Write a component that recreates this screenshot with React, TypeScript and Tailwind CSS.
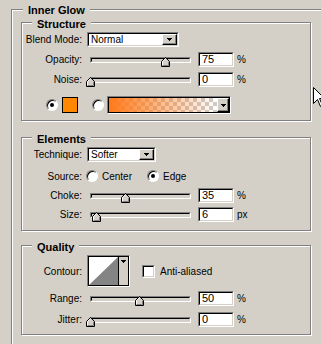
import React from "react";

const sunken = "border border-t-[#808080] border-l-[#808080] border-b-white border-r-white";
const sunkenInner = "border border-t-black border-l-black border-b-[#d4d0c8] border-r-[#d4d0c8]";
const etched = "border border-[#808080] shadow-[inset_1px_1px_0_#fff,1px_1px_0_#fff]";

function Arrow() {
  return (
    <svg width="5" height="3" viewBox="0 0 5 3" shapeRendering="crispEdges" className="block">
      <rect x="0" y="0" width="5" height="1" fill="#000" />
      <rect x="1" y="1" width="3" height="1" fill="#000" />
      <rect x="2" y="2" width="1" height="1" fill="#000" />
    </svg>
  );
}

function DropBtn({ className }: { className: string }) {
  return (
    <div
      className={`flex items-center justify-center bg-[#d4d0c8] border border-t-white border-l-white border-b-black border-r-black shadow-[inset_-1px_-1px_0_#808080] ${className}`}
    >
      <Arrow />
    </div>
  );
}

function Select({ value, className }: { value: string; className: string }) {
  return (
    <div className={`flex h-[15px] ${sunken} ${className}`}>
      <div className={`flex flex-1 bg-white ${sunkenInner}`}>
        <span className="flex-1 pl-[2px] leading-[11px]">{value}</span>
        <DropBtn className="w-[15px]" />
      </div>
    </div>
  );
}

function Thumb({ className }: { className: string }) {
  return (
    <svg width="9" height="10" viewBox="0 0 9 10" className={`absolute top-[-1px] ${className}`}>
      <path d="M4.5 0.5 L8.5 4.5 L8.5 9.5 L0.5 9.5 L0.5 4.5 Z" fill="#d4d0c8" />
      <path d="M1.5 9 L1.5 4.8 L4.5 1.8" fill="none" stroke="#fff" />
      <path d="M7.5 4.8 L7.5 8.5 L1.5 8.5" fill="none" stroke="#808080" />
      <path d="M4.5 0.5 L8.5 4.5 L8.5 9.5 L0.5 9.5 L0.5 4.5 Z" fill="none" stroke="#000" />
    </svg>
  );
}

function Slider({ thumb }: { thumb: string }) {
  return (
    <div className={`relative h-[6px] w-[101px] bg-[#d4d0c8] ${sunken}`}>
      <div className={`h-full ${sunkenInner}`} />
      <Thumb className={thumb} />
    </div>
  );
}

function Num({ value }: { value: string }) {
  return (
    <div className={`h-[15px] w-[36px] ${sunken}`}>
      <div className={`h-full bg-white pl-[2px] text-[11px] leading-[11px] ${sunkenInner}`}>{value}</div>
    </div>
  );
}

function SliderRow({
  label,
  value,
  unit,
  thumb,
  className,
}: {
  label: string;
  value: string;
  unit: string;
  thumb: string;
  className: string;
}) {
  return (
    <div className={`flex h-[15px] items-center ${className}`}>
      <span className="w-[60px] text-right">{label}</span>
      <div className="ml-[8px]">
        <Slider thumb={thumb} />
      </div>
      <div className="ml-[7px]">
        <Num value={value} />
      </div>
      <span className="ml-[3px]">{unit}</span>
    </div>
  );
}

function Radio({ checked }: { checked?: boolean }) {
  return (
    <div
      className={`flex h-[12px] w-[12px] items-center justify-center rounded-full bg-white ${sunken} shadow-[inset_1px_1px_0_#000]`}
    >
      {checked && <div className="h-[4px] w-[4px] rounded-full bg-black" />}
    </div>
  );
}

function Group({ title, className, children }: { title: string; className: string; children: React.ReactNode }) {
  return (
    <div className={`relative ${etched} ${className}`}>
      <span className="absolute left-[10px] top-[-6px] bg-[#d4d0c8] px-[5px] text-[11px] font-bold leading-[14px]">
        {title}
      </span>
      {children}
    </div>
  );
}

export default function App() {
  return (
    <div className="relative h-[344px] w-[321px] overflow-hidden bg-[#d4d0c8] font-['Liberation_Sans',Arial,sans-serif] text-[10px] text-black">
      <div className="relative ml-[11px] mt-[9px] h-[400px] border-l border-t border-[#808080] pl-[9px] pt-[12px] shadow-[inset_1px_1px_0_#fff]">
        <span className="absolute left-[11px] top-[-7px] bg-[#d4d0c8] px-[5px] text-[11px] font-bold leading-[14px]">
          Inner Glow
        </span>

        {/* Structure */}
        <Group title="Structure" className="w-[290px] pb-[6px]">
          <div className="mt-[9px] flex h-[15px] items-center">
            <span className="w-[60px] text-right">Blend Mode:</span>
            <Select value="Normal" className="ml-[5px] w-[92px]" />
          </div>
          <SliderRow label="Opacity:" value="75" unit="%" thumb="left-[70px]" className="mt-[5px]" />
          <SliderRow label="Noise:" value="0" unit="%" thumb="left-[-5px]" className="mt-[5px]" />
          <div className="mt-[9px] flex h-[18px] items-center">
            <div className="ml-[24px]">
              <Radio checked />
            </div>
            <div className="ml-[4px] h-[16px] w-[16px] border border-black bg-[#ff8800]" />
            <div className="ml-[14px]">
              <Radio />
            </div>
            <div className={`ml-[3px] flex h-[18px] w-[124px] ${sunken}`}>
              <div className="flex flex-1 border border-black">
                <div className="flex-1 bg-[image:linear-gradient(to_right,#ff7a1a,rgba(255,122,26,0)),repeating-conic-gradient(#cccccc_0_25%,#ffffff_0_50%)] bg-[length:100%_100%,8px_8px]" />
                <DropBtn className="w-[12px] border-l-black" />
              </div>
            </div>
          </div>
        </Group>

        {/* Elements */}
        <Group title="Elements" className="mt-[16px] w-[290px] pb-[8px]">
          <div className="mt-[9px] flex h-[15px] items-center">
            <span className="w-[60px] text-right">Technique:</span>
            <Select value="Softer" className="ml-[5px] w-[69px]" />
          </div>
          <div className="mt-[7px] flex h-[14px] items-center">
            <span className="w-[60px] text-right">Source:</span>
            <div className="ml-[4px]">
              <Radio />
            </div>
            <span className="ml-[4px] w-[45px]">Center</span>
            <Radio checked />
            <span className="ml-[4px]">Edge</span>
          </div>
          <SliderRow label="Choke:" value="35" unit="%" thumb="left-[30px]" className="mt-[5px]" />
          <SliderRow label="Size:" value="6" unit="px" thumb="left-[1px]" className="mt-[4px]" />
        </Group>

        {/* Quality */}
        <Group title="Quality" className="mt-[14px] w-[290px] pb-[7px]">
          <div className="mt-[9px] flex h-[32px] items-center">
            <span className="w-[60px] text-right">Contour:</span>
            <div className={`ml-[5px] flex h-[32px] w-[43px] ${sunken}`}>
              <div className="flex flex-1 border border-black">
                <svg width="29" height="28" viewBox="0 0 29 28" className="block bg-white">
                  <polygon points="0,28 29,0 29,28" fill="#848484" />
                </svg>
                <div className="flex w-[9px] justify-center border-l border-black bg-[#d4d0c8] pt-[3px]">
                  <Arrow />
                </div>
              </div>
            </div>
            <div className={`ml-[12px] h-[13px] w-[13px] ${sunken}`}>
              <div className={`h-full bg-white ${sunkenInner}`} />
            </div>
            <span className="ml-[5px]">Anti-aliased</span>
          </div>
          <SliderRow label="Range:" value="50" unit="%" thumb="left-[44px]" className="mt-[4px]" />
          <SliderRow label="Jitter:" value="0" unit="%" thumb="left-[-5px]" className="mt-[6px]" />
        </Group>
      </div>

      <svg width="13" height="20" viewBox="0 0 13 20" className="absolute left-[313px] top-[87px]">
        <path d="M0.5 0.5 L0.5 16.5 L4.5 12.5 L7.5 19.5 L9.5 18.5 L6.5 11.5 L11.5 11.5 Z" fill="#fff" stroke="#000" />
      </svg>
    </div>
  );
}
